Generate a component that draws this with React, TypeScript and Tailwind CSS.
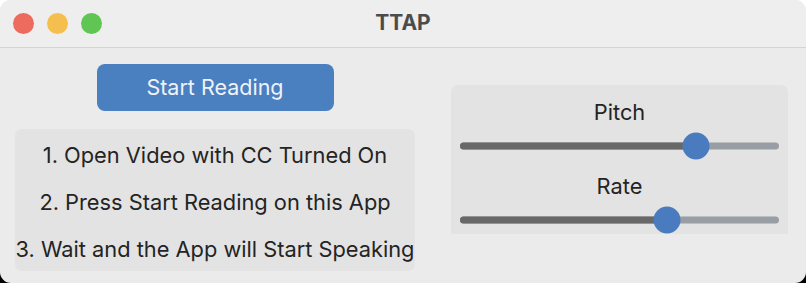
import React from "react";

function Slider({ pct }: { pct: number }) {
  return (
    <div className="relative h-[28px] w-full">
      <div className="absolute left-0 right-0 top-1/2 h-[7px] -translate-y-1/2 rounded-full bg-[#989ea4]" />
      <div
        className="absolute left-0 top-1/2 h-[7px] -translate-y-1/2 rounded-full bg-[#686868]"
        style={{ width: `${pct}%` }}
      />
      <div
        className="absolute top-1/2 h-[27px] w-[27px] -translate-x-1/2 -translate-y-1/2 rounded-full bg-[#4a7bbf]"
        style={{ left: `${pct}%` }}
      />
    </div>
  );
}

export default function App() {
  return (
    <div className="h-[283px] w-[806px] bg-[linear-gradient(to_bottom,#ffffff_50%,#000000_50%)] font-['Inter','Noto_Sans',sans-serif]">
      <div className="flex h-full w-full flex-col overflow-hidden rounded-[11px] bg-[#ebebeb]">
        <div className="relative flex h-[48px] shrink-0 items-center border-b border-[#d4d4d4] bg-[#eeeeee]">
          <div className="flex items-center gap-[13px] pl-[13px]">
            <div className="h-[21px] w-[21px] rounded-full bg-[#ec6a5e]" />
            <div className="h-[21px] w-[21px] rounded-full bg-[#f5bf4f]" />
            <div className="h-[21px] w-[21px] rounded-full bg-[#61c554]" />
          </div>
          <div className="absolute inset-x-0 top-0 flex h-[45px] items-center justify-center text-[21px] font-bold text-[#4b4b4b]">
            TTAP
          </div>
        </div>
        <div className="flex flex-1">
          <div className="flex w-[430px] flex-col items-center pt-[16px]">
            <div className="flex h-[47px] w-[237px] items-center justify-center rounded-[8px] bg-[#4a7fc0] text-[21.5px] text-[#eef2f9]">
              Start Reading
            </div>
            <div className="mt-[18px] flex h-[142px] w-[400px] flex-col items-center gap-[21px] rounded-[7px] bg-[#e3e3e3] pt-[13px] text-[21.8px] leading-[26px] text-[#242424] whitespace-nowrap">
              <div>1. Open Video with CC Turned On</div>
              <div>2. Press Start Reading on this App</div>
              <div>3. Wait and the App will Start Speaking</div>
            </div>
          </div>
          <div className="flex-1 pl-[21px] pr-[18px] pt-[37px]">
            <div className="flex h-[149px] flex-col items-center rounded-t-[7px] bg-[#e3e3e3] px-[9px] pt-[14px] text-[21.8px] leading-[26px] text-[#242424]">
              <div>Pitch</div>
              <div className="mt-[7px] w-full">
                <Slider pct={74} />
              </div>
              <div className="mt-[13px]">Rate</div>
              <div className="mt-[7px] w-full">
                <Slider pct={65} />
              </div>
            </div>
          </div>
        </div>
      </div>
    </div>
  );
}
